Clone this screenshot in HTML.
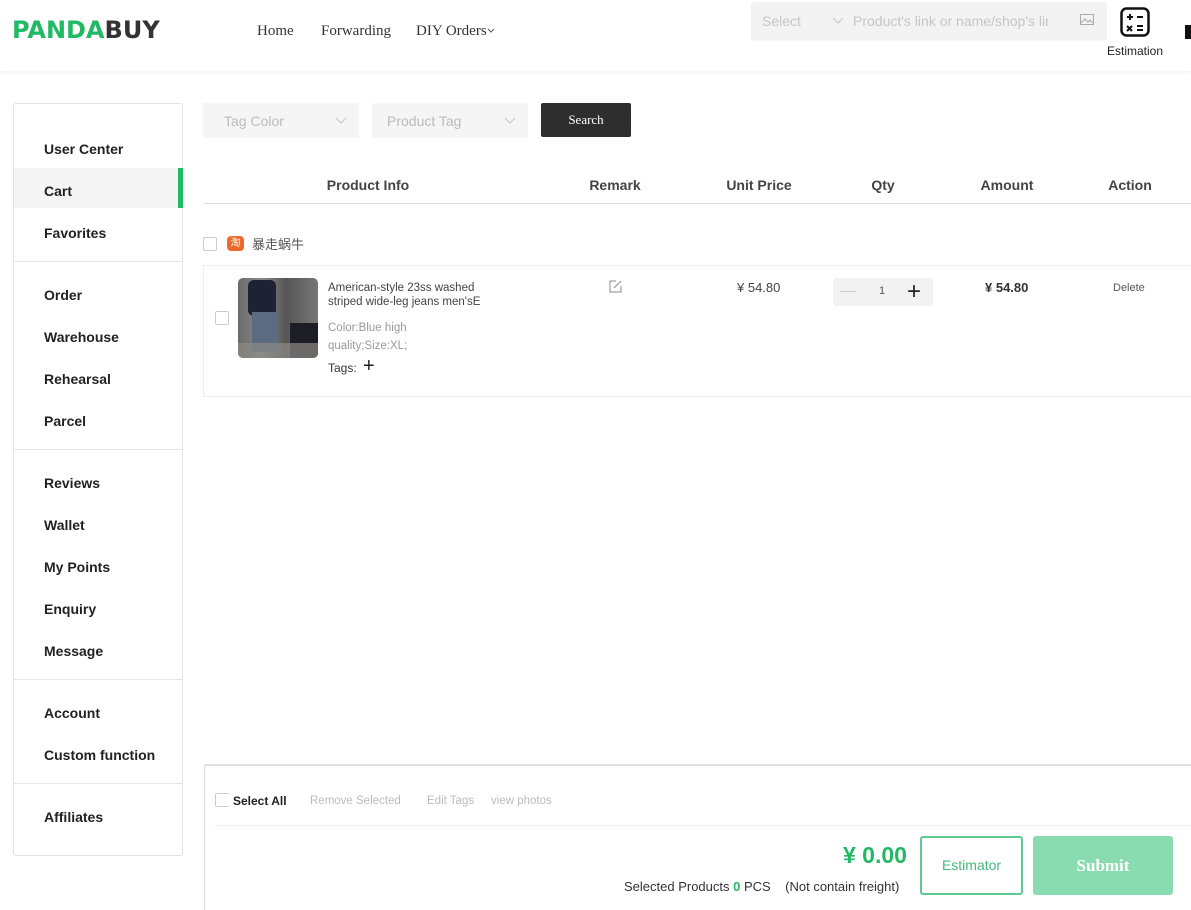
<!DOCTYPE html>
<html><head><meta charset="utf-8"><style>
*{margin:0;padding:0;box-sizing:border-box}
body{width:1191px;height:910px;overflow:hidden;background:#fff;font-family:"Liberation Sans","Noto Sans CJK SC",sans-serif;position:relative;color:#333}
.a{position:absolute}
.hdr{left:0;top:0;width:1191px;height:71px;background:#fff;box-shadow:0 2px 4px rgba(0,0,0,.06)}
.nav{font-family:"Liberation Serif",serif;font-size:15px;color:#333;top:23px}
.side{left:13px;top:103px;width:170px;height:753px;border:1px solid #e3e3e3;border-radius:3px}
.si{position:absolute;left:30px;font-size:14px;font-weight:bold;color:#222}
.dv{position:absolute;left:0;width:168px;height:1px;background:#e6e6e6}
.sel{background:#f5f5f5;color:#bbb;font-size:14px;height:35px;border-radius:2px}
.th{top:177px;font-size:14px;font-weight:bold;color:#444;transform:translateX(-50%)}
.cb{width:14px;height:14px;border:1px solid #ccc;border-radius:2px;background:#fff}
</style></head><body>
<div class="a hdr"></div>
<div class="a" style="left:12px;top:16px;font-size:24px;font-weight:bold;font-family:'DejaVu Sans',sans-serif;line-height:28px"><span style="color:#22b964">PANDA</span><span style="color:#333">BUY</span></div>
<div class="a nav" style="left:257px">Home</div>
<div class="a nav" style="left:321px">Forwarding</div>
<div class="a nav" style="left:416px">DIY Orders</div>
<svg class="a" style="left:487px;top:28px" width="8" height="6"><path d="M1 1l3 3 3-3" fill="none" stroke="#555"/></svg>
<div class="a" style="left:751px;top:2px;width:356px;height:39px;background:#f3f3f3;border-radius:3px"></div>
<div class="a" style="left:762px;top:13px;font-size:14px;color:#c5c5c5">Select</div>
<svg class="a" style="left:832px;top:17px" width="12" height="8"><path d="M1 1l5 5 5-5" fill="none" stroke="#c5c5c5"/></svg>
<div class="a" style="left:853px;top:13px;font-size:14px;color:#c5c5c5;width:195px;overflow:hidden;white-space:nowrap">Product's link or name/shop's link</div>
<svg class="a" style="left:1080px;top:14px" width="14" height="12"><rect x=".5" y=".5" width="13" height="10" fill="none" stroke="#aaa"/><path d="M1 9l4-4 3 3 2-2 3 3" fill="none" stroke="#aaa"/></svg>
<svg class="a" style="left:1120px;top:7px" width="30" height="30"><rect x="1.5" y="1.5" width="27" height="27" rx="5" fill="none" stroke="#111" stroke-width="2.5"/><path d="M7 10h6M10 7v6M17 10h6M7 19l5 5M12 19l-5 5M17 19h6M17 23h6" stroke="#111" stroke-width="2"/></svg>
<div class="a" style="left:1107px;top:44px;font-size:12px;color:#222">Estimation</div>
<div class="a" style="left:1185px;top:25px;width:6px;height:14px;background:#111"></div>

<div class="a side">
<div style="position:absolute;left:0;top:64px;width:168px;height:40px;background:#f5f5f5"></div>
<div style="position:absolute;left:164px;top:64px;width:5px;height:40px;background:#22b964"></div>
<div class="si" style="top:37px">User Center</div>
<div class="si" style="top:79px">Cart</div>
<div class="si" style="top:121px">Favorites</div>
<div class="dv" style="top:157px"></div>
<div class="si" style="top:183px">Order</div>
<div class="si" style="top:225px">Warehouse</div>
<div class="si" style="top:267px">Rehearsal</div>
<div class="si" style="top:309px">Parcel</div>
<div class="dv" style="top:345px"></div>
<div class="si" style="top:371px">Reviews</div>
<div class="si" style="top:413px">Wallet</div>
<div class="si" style="top:455px">My Points</div>
<div class="si" style="top:497px">Enquiry</div>
<div class="si" style="top:539px">Message</div>
<div class="dv" style="top:575px"></div>
<div class="si" style="top:601px">Account</div>
<div class="si" style="top:643px">Custom function</div>
<div class="dv" style="top:679px"></div>
<div class="si" style="top:705px">Affiliates</div>
</div>

<div class="a sel" style="left:203px;top:103px;width:156px"><span style="position:absolute;left:21px;top:10px">Tag Color</span><svg style="position:absolute;right:12px;top:14px" width="12" height="8"><path d="M1 1l5 5 5-5" fill="none" stroke="#c5c5c5"/></svg></div>
<div class="a sel" style="left:372px;top:103px;width:156px"><span style="position:absolute;left:15px;top:10px">Product Tag</span><svg style="position:absolute;right:12px;top:14px" width="12" height="8"><path d="M1 1l5 5 5-5" fill="none" stroke="#c5c5c5"/></svg></div>
<div class="a" style="left:541px;top:103px;width:90px;height:34px;background:#2e2e2e;border-radius:2px;color:#fff;font-family:'Liberation Serif',serif;font-size:13px;text-align:center;line-height:34px">Search</div>

<div class="a th" style="left:368px">Product Info</div>
<div class="a th" style="left:615px">Remark</div>
<div class="a th" style="left:759px">Unit Price</div>
<div class="a th" style="left:883px">Qty</div>
<div class="a th" style="left:1007px">Amount</div>
<div class="a th" style="left:1130px">Action</div>
<div class="a" style="left:203px;top:203px;width:988px;height:1px;background:#ddd"></div>

<div class="a cb" style="left:203px;top:237px"></div>
<div class="a" style="left:227px;top:236px;width:17px;height:15px;background:#ec6a2c;border-radius:4px;color:#fff;font-size:10px;text-align:center;line-height:15px">淘</div>
<div class="a" style="left:252px;top:234px;font-size:13px;color:#555">暴走蜗牛</div>

<div class="a" style="left:203px;top:265px;width:990px;height:132px;border:1px solid #eee"></div>
<div class="a cb" style="left:215px;top:311px"></div>
<div class="a" style="left:238px;top:278px;width:80px;height:80px;border-radius:5px;background:linear-gradient(90deg,#6a6a6a 0%,#8a8a8a 30%,#555 60%,#777 100%);overflow:hidden">
<div style="position:absolute;left:10px;top:2px;width:28px;height:36px;background:#1f2233;border-radius:6px"></div>
<div style="position:absolute;left:14px;top:34px;width:26px;height:40px;background:#5b6c82"></div>
<div style="position:absolute;left:52px;top:45px;width:28px;height:35px;background:#1d1e25"></div>
<div style="position:absolute;left:0;top:65px;width:80px;height:15px;background:#8d8a84;opacity:.7"></div>
</div>
<div class="a" style="left:328px;top:281px;font-size:11.5px;line-height:14px;color:#444;width:175px">American-style 23ss washed striped wide-leg jeans men'sE</div>
<div class="a" style="left:328px;top:319px;font-size:11.5px;line-height:18px;color:#999;width:100px">Color:Blue high quality;Size:XL;</div>
<div class="a" style="left:328px;top:361px;font-size:12px;color:#333">Tags:</div>
<div class="a" style="left:363px;top:355px;font-size:20px;color:#222">+</div>
<svg class="a" style="left:609px;top:280px" width="13" height="13"><path d="M7 1H1v11h11V6M5 8l7-7" fill="none" stroke="#888"/></svg>
<div class="a" style="left:737px;top:280px;font-size:13px;color:#444">¥ 54.80</div>
<div class="a" style="left:833px;top:278px;width:100px;height:28px;background:#f2f2f2;border-radius:3px"></div>
<div class="a" style="left:840px;top:291px;width:16px;height:1px;background:#ccc"></div>
<div class="a" style="left:879px;top:285px;font-size:11px;color:#555">1</div>
<div class="a" style="left:907px;top:279px;font-size:24px;line-height:26px;color:#222">+</div>
<div class="a" style="left:985px;top:280px;font-size:13px;font-weight:bold;color:#333">¥ 54.80</div>
<div class="a" style="left:1113px;top:282px;font-size:11px;color:#555">Delete</div>

<div class="a" style="left:204px;top:764px;width:987px;height:146px;border-top:2px solid #e0e0e0;border-left:1px solid #e0e0e0"></div>
<div class="a cb" style="left:215px;top:793px;border-right:none"></div>
<div class="a" style="left:233px;top:794px;font-size:12px;font-weight:bold;color:#222">Select All</div>
<div class="a" style="left:310px;top:795px;font-size:11.5px;color:#bbb">Remove Selected</div>
<div class="a" style="left:427px;top:795px;font-size:11.5px;color:#bbb">Edit Tags</div>
<div class="a" style="left:491px;top:795px;font-size:11.5px;color:#bbb">view photos</div>
<div class="a" style="left:215px;top:825px;width:976px;height:1px;background:#eee"></div>
<div class="a" style="left:843px;top:842px;font-size:23px;font-weight:bold;color:#22b964">¥ 0.00</div>
<div class="a" style="left:624px;top:879px;font-size:13px;color:#333;white-space:nowrap">Selected Products <b style="color:#22b964">0</b> PCS &nbsp;&nbsp;&nbsp;(Not contain freight)</div>
<div class="a" style="left:920px;top:836px;width:103px;height:59px;border:2px solid #5ccb92;border-radius:3px;color:#46b87d;font-size:14px;text-align:center;line-height:55px">Estimator</div>
<div class="a" style="left:1033px;top:836px;width:140px;height:59px;background:#88dcb0;border-radius:3px;color:#fff;font-family:'Liberation Serif',serif;font-weight:bold;font-size:17px;text-align:center;line-height:59px">Submit</div>
</body></html>
